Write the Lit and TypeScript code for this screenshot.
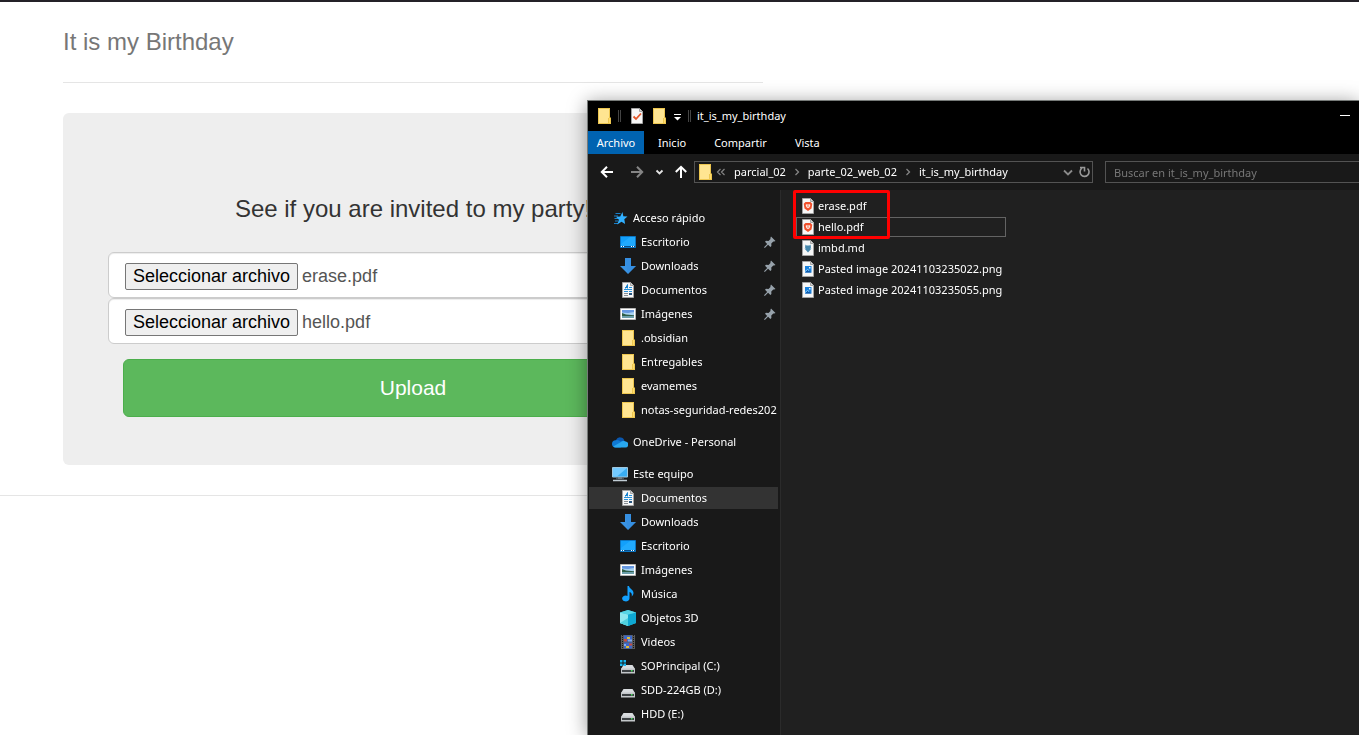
import { LitElement, html, css, svg, TemplateResult } from "lit";
import { customElement } from "lit/decorators.js";
import { classMap } from "lit/directives/class-map.js";

type Entry = { icon: string; label: string; root?: boolean; pinned?: boolean; current?: boolean; gap?: boolean };

const folder = svg`
  <path d="M2 0h12v9l1 1v6h-13z" fill="#edc64f"/>
  <path d="M3 1h10v14h-10z" fill="#ffe591"/>
  <path d="M12 10h1v5h-1z" fill="#edc64f"/>
  <path d="M13 10h1v5h-1z" fill="#ffdc6b"/>`;

const page = svg`
  <path d="M2.500 .5h8l3 3v12h-11z" fill="#f7f7f7" stroke="#a3a3a3"/>
  <path d="M10.500 .5v3h3" fill="#d5d5d5" stroke="#a3a3a3"/>`;

const drive = svg`
  <path d="M3.500 7h9l2.500 4h-14z" fill="#d9dcdf"/>
  <path d="M1 10.500h14v5h-14z" fill="#c3c6c9"/>
  <path d="M2 12h12v2h-12z" fill="#3d4144"/>
  <path d="M11 12h1.500v1.500h-1.500z" fill="#46e05a"/>`;

const icons: Record<string, TemplateResult | ReturnType<typeof svg>> = {
  folder,
  star: svg`
    <path d="M3.500 3.500h5M2 6h4M2.500 8.500h4M3 11h3M2 13.500h4" stroke="#1a80c8" stroke-width="1"/>
    <path d="M10.500 2l.8 4.300 4.200.2-3.200 2.800.8 4.700-3.600-2.300-4.300 2.800 1.700-4.800-2.900-3 4.200-.2z" fill="#31b0ff"/>`,
  desktop: svg`
    <path d="M.5 2.500h15v11h-15z" fill="#12a0fb" stroke="#0b76c4"/>
    <path d="M1 10l9-7h5v9h-14z" fill="#2bb0ff" opacity=".6"/>
    <path d="M1 12.500h14" stroke="#064f8b"/>
    <path d="M1 12.500h1M3 12.500h1M11 12.500h1M13 12.500h1" stroke="#fff"/>`,
  download: svg`<path d="M5 0h6v8h5l-8 8-8-8h5z" fill="#3a94e4"/><path d="M5 0h6v8h5l-8 8z" fill="#2f86db" opacity=".3"/>`,
  document: svg`
    ${page}
    <path d="M7.500 2.500l-2 4M7.500 2.500v4M5 5.500h3" stroke="#1682cf" fill="none"/>
    <path d="M9 5.500h3M4 7.500h8M4 9.500h4M9 9.500h3" stroke="#2a92da"/>
    <path d="M4 11.500h4M4 13.500h4" stroke="#8a8f94"/>
    <path d="M9 11h3v2h-3z" fill="#28557e"/>`,
  picture: svg`
    <path d="M.5 2.500h15v11h-15z" fill="#fff" stroke="#b5b5b5"/>
    <path d="M2 4h12v8h-12z" fill="#a9d3f3"/>
    <path d="M2 4h12v2l-6 1-6-.5z" fill="#6597e0"/>
    <path d="M2 7l4 1.500 8 .8v1h-12z" fill="#2f5e47"/>
    <path d="M2 10h12v2h-12z" fill="#6b9eaa"/>`,
  cloud: svg`
    <path d="M4 6a4.500 4.500 0 0 1 8.500 1l-5 4-5-2z" fill="#0a57ae"/>
    <path d="M3.800 6.200a3.600 3.600 0 0 0-.3 7.300h5l5-6a4.500 4.500 0 0 0-5 0 4.500 4.500 0 0 0-4.700-1.300z" fill="#0f79d4"/>
    <path d="M9 8a4 4 0 0 1 4.500-.5 3 3 0 0 1-.5 6h-9.500a3.600 3.600 0 0 1-2.300-1z" fill="#29a7ee"/>`,
  computer: svg`
    <path d="M.5 1.500h15v9.500h-15z" fill="#39adf3" stroke="#9fc7de"/>
    <path d="M1 2h14l-10 8.500h-4z" fill="#73caff"/>
    <path d="M6 11.500h4v1.500h-4z" fill="#8997a1"/>
    <path d="M1 14.500h14" stroke="#c1ccd4" stroke-width="1.500"/>
    <path d="M4 12.800h8" stroke="#63717b"/>`,
  music: svg`
    <path d="M7.500 0h1.500c.3 2.600 4.500 3.600 4.500 7 0 1.700-.8 2.500-1.800 3.500.7-2.500-.4-4-2.200-4.600v6.600a3.700 2.900 0 1 1-2-2.600z" fill="#13a1ff"/>`,
  cube: svg`
    <path d="M0 2.500l8-2.500 8 2.500v10.500l-8 3-8-3z" fill="#35c5df"/>
    <path d="M0 2.500l8 2v11.500l-8-3z" fill="#8de8f0"/>
    <path d="M8 4.500l8-2v10.500l-8 3z" fill="#0ea8d2"/>
    <path d="M0 2.500l8-2.500 8 2.500-8 2z" fill="#56d5e5"/>
    <path d="M0 13l8-5v8z" fill="#4fd1df"/>`,
  video: svg`
    <path d="M1 1h14v14h-14z" fill="#5a5a5a"/>
    <path d="M2.500 1v14M13.500 1v14" stroke="#161616" stroke-dasharray="1 1" stroke-width="1"/>
    <path d="M4 1.500h8v6h-8zM4 8.500h8v6h-8z" fill="#3d68c8"/>
    <path d="M4 5h3v2.500h-3zM9 9.500h3v2h-3z" fill="#c84b38"/>
    <path d="M7 3h3v2h-3zM6 12h3v2h-3z" fill="#dfbd35"/>
    <path d="M8 5.500h4v2h-4zM4 10h2v2h-2z" fill="#7fa8ec"/>`,
  system: svg`${drive}<path d="M0 2h2.500v2.500h-2.500zM3.500 2h2.500v2.500h-2.500zM0 5.500h2.500v2.500h-2.500zM3.500 5.500h2.500v2.500h-2.500z" fill="#18b9f2"/>`,
  drive,
  check: svg`${page}<path d="M4.500 8.500l2.500 2.500 5-5.500" fill="none" stroke="#e4572a" stroke-width="1.800"/>`,
  pdf: svg`
    ${page}
    <path d="M5.500 4h5l1.800 1.800-.8 4.700-3.500 2.500-3.500-2.500-.8-4.700z" fill="#f1502c"/>
    <path d="M6 6.200l2 .4 2-.4.300 1-.8 2-1.500 1-1.500-1-.8-2z" fill="#ffe9e3"/>
    <path d="M8 7v2" stroke="#f1502c" stroke-width=".8"/>`,
  markdown: svg`
    ${page}
    <path d="M5.500 4.500l1 1h3l1-1 .5 3-1 1h1.500l-3.500 4-3.500-4h1.500l-1-1z" fill="#4788ad"/>`,
  image: svg`
    ${page}
    <path d="M5 5h6.500v6.500h-6.500z" fill="#1c82dc"/>
    <path d="M5 11.500l2.500-3 4 3z" fill="#105aaa"/>
    <path d="M9 6h1.500v1.500h-1.500z" fill="#e9f6ff"/>
    <path d="M5 10.500l2.500-2 1.500 1" stroke="#8ad0ff" fill="none"/>`,
  pin: svg`<path d="M9 2.500l4.500 4.500-1.300.6-.9-.1-2 2 .1 2.500-1 1-2.300-2.300-3.300 3.300-.8-.8 3.200-3.200-2.200-2.200 1-1 2.500.1 2-2-.1-1z" fill="#97a2ab"/>`,
  back: svg`<path d="M14 8h-11M8 2.800l-5.200 5.200 5.200 5.200" fill="none" stroke="#fff" stroke-width="2"/>`,
  forward: svg`<path d="M2 8h11M8 2.800l5.200 5.200-5.200 5.200" fill="none" stroke="#858585" stroke-width="2"/>`,
  up: svg`<path d="M8 14v-11M2.800 8l5.200-5.200 5.200 5.200" fill="none" stroke="#fff" stroke-width="2"/>`,
  recent: svg`<path d="M5.500 6.500l3 3 3-3" fill="none" stroke="#e4e4e4" stroke-width="1.800"/>`,
  expand: svg`<path d="M4 6.500l4 4 4-4" fill="none" stroke="#8a8a8a" stroke-width="1.800"/>`,
  refresh: svg`<path d="M11.500 4.500a4.500 4.500 0 1 1-5.500-.3M4 3.500h4.500v4" fill="none" stroke="#999" stroke-width="1.600"/>`,
  next: svg`<path d="M6.500 5l3 3-3 3" fill="none" stroke="#858585" stroke-width="1.300"/>`,
  previous: svg`<path d="M5.500 5l-3 3 3 3M9.500 5l-3 3 3 3" fill="none" stroke="#858585" stroke-width="1.200"/>`,
  customize: svg`<path d="M5 6.500h7" stroke="#fff"/><path d="M5 9h7l-3.500 3.500z" fill="#fff"/>`,
  minimize: svg`<path d="M3 7.500h10" stroke="#fff"/>`,
};

const icon = (name: string) => html`<svg class="icon" viewBox="0 0 16 16" aria-hidden="true">${icons[name]}</svg>`;

const places: Entry[] = [
  { icon: "star", label: "Acceso rápido", root: true },
  { icon: "desktop", label: "Escritorio", pinned: true },
  { icon: "download", label: "Downloads", pinned: true },
  { icon: "document", label: "Documentos", pinned: true },
  { icon: "picture", label: "Imágenes", pinned: true },
  { icon: "folder", label: ".obsidian" },
  { icon: "folder", label: "Entregables" },
  { icon: "folder", label: "evamemes" },
  { icon: "folder", label: "notas-seguridad-redes202" },
  { icon: "cloud", label: "OneDrive - Personal", root: true, gap: true },
  { icon: "computer", label: "Este equipo", root: true, gap: true },
  { icon: "document", label: "Documentos", current: true },
  { icon: "download", label: "Downloads" },
  { icon: "desktop", label: "Escritorio" },
  { icon: "picture", label: "Imágenes" },
  { icon: "music", label: "Música" },
  { icon: "cube", label: "Objetos 3D" },
  { icon: "video", label: "Videos" },
  { icon: "system", label: "SOPrincipal (C:)" },
  { icon: "drive", label: "SDD-224GB (D:)" },
  { icon: "drive", label: "HDD (E:)" },
];

const files = [
  { icon: "pdf", label: "erase.pdf" },
  { icon: "pdf", label: "hello.pdf", focused: true },
  { icon: "markdown", label: "imbd.md" },
  { icon: "image", label: "Pasted image 20241103235022.png" },
  { icon: "image", label: "Pasted image 20241103235055.png" },
];

@customElement("birthday-page")
export class BirthdayPage extends LitElement {
  static styles = css`
    :host { display: block; border-top: 2px solid #242128; color: #333; font-family: "Liberation Sans", Arial, sans-serif; }
    .container { max-width: 700px; margin-left: 63px; }
    .header { padding: 20px 0; border-bottom: 1px solid #e5e5e5; }
    .title { margin: 0; color: #777; font-size: 24px; font-weight: 400; line-height: 40px; }
    .panel { margin-top: 30px; padding: 83px 45px 48px; border-radius: 6px; background: #eee; }
    .heading { margin: 0 0 30px; font-size: 24px; font-weight: 400; line-height: 26px; text-align: center; }
    .field { position: relative; display: flex; align-items: center; gap: 4px; height: 46px; box-sizing: border-box; padding: 2px 16px 0; border: 1px solid #ccc; border-radius: 6px; background: #fff; color: #555; font-size: 18px; box-shadow: inset 0 1px 1px rgba(0, 0, 0, 0.075); }
    .file { position: absolute; inset: 0; width: 100%; opacity: 0; }
    .choose { padding: 2px 7px; border: 1px solid #767676; border-radius: 2px; background: #efefef; color: #000; line-height: 21px; }
    .actions { padding: 15px 15px 0; }
    .upload { display: block; width: 100%; height: 58px; border: 1px solid #4cae4c; border-radius: 6px; background: #5cb85c; color: #fff; font: 21px "Liberation Sans", Arial, sans-serif; }
    .rule { margin: 30px 0 0; border: 0; border-top: 1px solid #e5e5e5; }
  `;

  private field(name: string) {
    return html`<label class="field">
      <input class="file" type="file" />
      <span class="choose">Seleccionar archivo</span><span>${name}</span>
    </label>`;
  }

  render() {
    return html`
      <div class="container">
        <header class="header"><h3 class="title">It is my Birthday</h3></header>
        <form class="panel" @submit=${(e: Event) => e.preventDefault()}>
          <h1 class="heading">See if you are invited to my party!</h1>
          ${this.field("erase.pdf")} ${this.field("hello.pdf")}
          <div class="actions"><button class="upload">Upload</button></div>
        </form>
      </div>
      <hr class="rule" />
    `;
  }
}

@customElement("file-explorer")
export class FileExplorer extends LitElement {
  static styles = css`
    :host { display: flex; flex-direction: column; box-sizing: border-box; border: 1px solid #767a78; border-width: 1px 0 0 1px; background: #191919; color: #fff; font: 11px/16px "Noto Sans", "Open Sans", sans-serif; box-shadow: 0 2px 18px rgba(0, 0, 0, 0.4); overflow: hidden; white-space: nowrap; }
    button { display: flex; align-items: center; padding: 0; border: 0; background: none; color: inherit; font: inherit; }
    .icon { display: block; flex: none; width: 16px; height: 16px; }
    .titlebar { display: flex; align-items: center; height: 30px; padding: 0 6px 0 8px; background: #000; }
    .separator { flex: none; width: 1px; height: 12px; border: 1px solid #444; border-width: 0 1px; }
    .separator-start { margin: 0 8px 0 6px; }
    .separator-end { margin: 0 6px 0 3px; }
    .quick { display: flex; gap: 6px; margin-right: 2px; }
    .caption { flex: 1; }
    .tabs { display: flex; height: 23px; background: #000; }
    .tab { padding: 0 14px; }
    .tab-main { justify-content: center; min-width: 56px; padding: 0 8px; background: #0063b1; }
    .toolbar { display: flex; align-items: center; height: 36px; padding-left: 11px; }
    .nav { display: flex; align-items: center; gap: 6px; }
    .nav-forward { margin-left: 8px; }
    .address { display: flex; align-items: center; box-sizing: border-box; flex: 0 1 399px; height: 22px; margin: 0 12px 0 5px; padding: 0 0 0 2px; border: 1px solid #535353; }
    .crumbs { display: flex; align-items: center; flex: 1; gap: 2px; }
    .crumb { margin: 0 1px; }
    .tools { display: flex; }
    .search { flex: 1; min-width: 0; height: 22px; box-sizing: border-box; padding: 0 8px; border: 1px solid #535353; border-right: 0; border-radius: 0; background: #191919; color: #fff; font: inherit; }
    .search::placeholder { color: #777; }
    .body { display: flex; flex: 1; min-height: 0; }
    .sidebar { flex: none; box-sizing: border-box; width: 193px; padding: 16px 2px 0 1px; border-right: 1px solid #2b2b2b; }
    .places, .files { margin: 0; padding: 0; list-style: none; }
    .place { display: flex; align-items: center; gap: 5px; height: 24px; padding-left: 31px; }
    .place.root { padding-left: 23px; }
    .place.gap { margin-top: 8px; }
    .place.current { background: #333; box-shadow: inset 0 1px #191919, inset 0 -1px #191919; }
    .label { flex: 1; min-width: 0; overflow: hidden; }
    .content { flex: 1; background: #202020; }
    .files { position: relative; width: 210px; padding: 6px 0 0 15px; }
    .item { display: flex; align-items: center; gap: 2px; height: 20px; box-sizing: border-box; margin-bottom: 1px; padding-left: 3px; border: 1px solid transparent; }
    .item.focused { border-color: #636363; }
    .marker { position: absolute; top: 0; left: 12px; width: 91px; height: 43px; border: 3px solid #f00; border-radius: 2px; }
  `;

  render() {
    return html`
      <div class="titlebar">
        ${icon("folder")}<i class="separator separator-start"></i>
        <div class="quick">
          <button aria-label="Propiedades">${icon("check")}</button>
          <button aria-label="Nueva carpeta">${icon("folder")}</button>
        </div>
        <button aria-label="Personalizar">${icon("customize")}</button>
        <i class="separator separator-end"></i>
        <span class="caption">it_is_my_birthday</span>
        <button aria-label="Minimizar">${icon("minimize")}</button>
      </div>
      <div class="tabs">
        <button class="tab tab-main">Archivo</button>
        ${["Inicio", "Compartir", "Vista"].map((t) => html`<button class="tab">${t}</button>`)}
      </div>
      <div class="toolbar">
        <div class="nav">
          <button aria-label="Atrás">${icon("back")}</button>
          <button class="nav-forward" aria-label="Adelante">${icon("forward")}</button>
          <button aria-label="Recientes">${icon("recent")}</button>
          <button aria-label="Arriba">${icon("up")}</button>
        </div>
        <div class="address">
          <div class="crumbs">
            ${icon("folder")}${icon("previous")}
            <button class="crumb">parcial_02</button>${icon("next")}
            <button class="crumb">parte_02_web_02</button>${icon("next")}
            <button class="crumb">it_is_my_birthday</button>
          </div>
          <div class="tools">
            <button aria-label="Ubicaciones anteriores">${icon("expand")}</button>
            <button aria-label="Actualizar">${icon("refresh")}</button>
          </div>
        </div>
        <input class="search" type="text" aria-label="Buscar" placeholder="Buscar en it_is_my_birthday" />
      </div>
      <div class="body">
        <nav class="sidebar">
          <ul class="places">
            ${places.map(
              (p) => html`<li class=${classMap({ place: true, root: !!p.root, gap: !!p.gap, current: !!p.current })}>
                ${icon(p.icon)}<span class="label">${p.label}</span>${p.pinned ? icon("pin") : ""}
              </li>`
            )}
          </ul>
        </nav>
        <main class="content">
          <ul class="files">
            ${files.map((f) => html`<li class=${classMap({ item: true, focused: !!f.focused })}>${icon(f.icon)}<span>${f.label}</span></li>`)}
            <li class="marker" role="presentation"></li>
          </ul>
        </main>
      </div>
    `;
  }
}

@customElement("app-root")
export class AppRoot extends LitElement {
  static styles = css`
    :host { display: block; position: relative; min-height: 100vh; background: #fff; overflow: hidden; }
    .window { position: absolute; top: 100px; right: 0; bottom: 0; left: 587px; }
  `;

  render() {
    return html`<birthday-page></birthday-page><file-explorer class="window"></file-explorer>`;
  }
}
